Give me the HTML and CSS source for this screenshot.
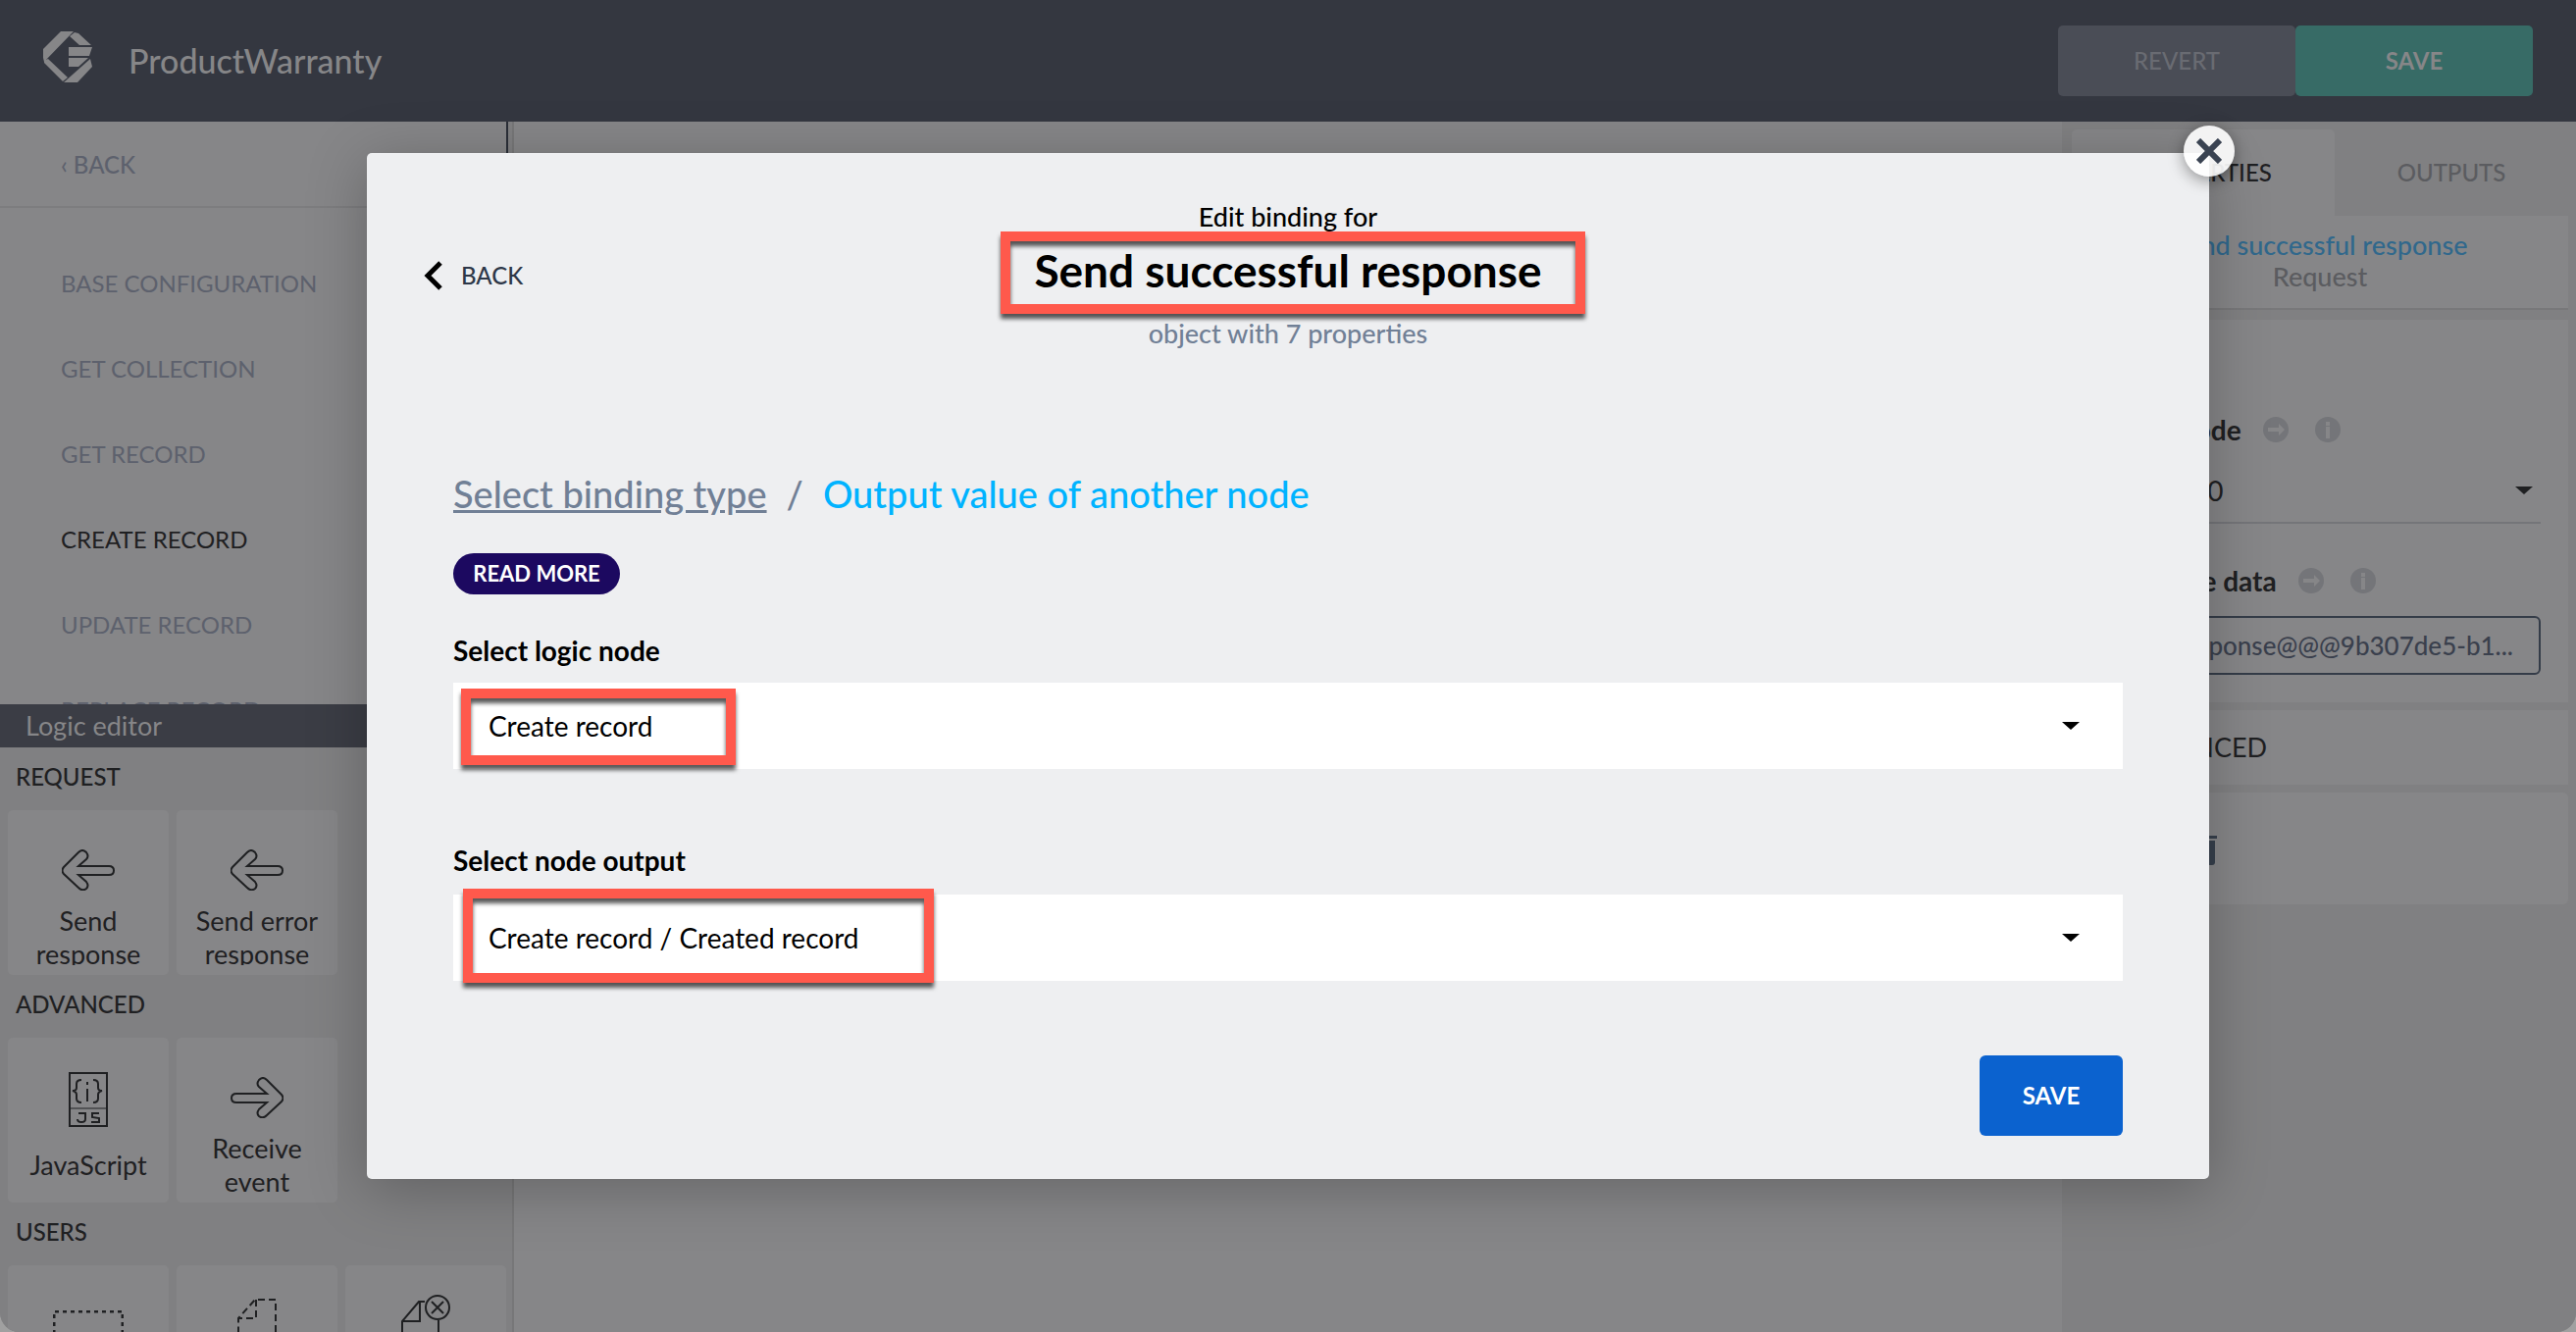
FILE: index.html
```html
<!DOCTYPE html>
<html lang="en">
<head>
<meta charset="utf-8">
<title>ProductWarranty</title>
<link rel="stylesheet" href="styles.css">
</head>
<body>
<svg class="sprite" aria-hidden="true">
  <symbol id="arrow" viewBox="0 0 54 42">
    <path d="M2 18 17 3Q21 -1 25 3Q28 7 25 10L17 17H48Q53 17 53 21.500Q53 26 48 26H17L25 33Q28 37 25 40Q21 43 17 39L2 25Q-1 21.500 2 18Z" fill="none" stroke="currentColor" stroke-width="2"/>
  </symbol>
  <symbol id="go" viewBox="0 0 26 26">
    <circle cx="13" cy="13" r="13" fill="#747579"/>
    <path d="M5 11h11V7l6 6-6 6v-4H5z" fill="#868688"/>
  </symbol>
  <symbol id="info" viewBox="0 0 26 26">
    <circle cx="13" cy="13" r="13" fill="#747579"/>
    <path d="M11 5h4v4h-4zM11 10h4v12h-4z" fill="#868688"/>
  </symbol>
</svg>
<div class="app">
  <header class="topbar">
    <svg class="logo" viewBox="0 0 50 52" aria-hidden="true">
      <path d="M18 0H31L1 31 0 27V18ZM32 1 36 2 49 14H37L27 5ZM26 16H50L47 25H26ZM26 27H46L36 36H26ZM5 28 25 47 20 51 1 32V30ZM48 28 50 36 35 52H21Z" fill="currentColor"/>
    </svg>
    <h1 class="product">ProductWarranty</h1>
    <button class="top-btn revert" type="button">REVERT</button>
    <button class="top-btn save" type="button">SAVE</button>
  </header>
  <div class="body">
    <aside class="left">
      <nav class="nav">
        <a class="nav-back" href="#">‹ BACK</a>
        <ul class="nav-list">
          <li><a href="#">BASE CONFIGURATION</a></li>
          <li><a href="#">GET COLLECTION</a></li>
          <li><a href="#">GET RECORD</a></li>
          <li><a class="current" href="#">CREATE RECORD</a></li>
          <li><a href="#">UPDATE RECORD</a></li>
          <li><a href="#">REPLACE RECORD</a></li>
        </ul>
      </nav>
      <section class="logic">
        <h2 class="logic-title">Logic editor</h2>
        <h3 class="group">REQUEST</h3>
        <div class="cards">
          <div class="card"><svg class="ic-arrow"><use href="#arrow"/></svg><span>Send response</span></div>
          <div class="card"><svg class="ic-arrow"><use href="#arrow"/></svg><span>Send error response</span></div>
        </div>
        <h3 class="group">ADVANCED</h3>
        <div class="cards">
          <div class="card">
            <svg class="ic-js" viewBox="0 0 40 56"><g fill="none" stroke="currentColor" stroke-width="2"><path d="M1 1H39V55H1Z"/><path d="M1 37H39" stroke-width="1"/><path d="M13 8Q8 8 8 12V16Q8 19 4 19Q8 20 8 23V27Q8 31 13 31M25 8Q30 8 30 12V16Q30 19 34 19Q30 20 30 23V27Q30 31 25 31M19 10V13M19 17V30"/><path d="M10 42H17V48Q17 51 13 51Q9 51 9 48M31 42H24V46L31 47V51H23"/></g></svg>
            <span>JavaScript</span>
          </div>
          <div class="card"><svg class="ic-arrow flip"><use href="#arrow"/></svg><span>Receive event</span></div>
        </div>
        <h3 class="group">USERS</h3>
        <div class="cards">
          <div class="card"><svg class="ic-user" viewBox="0 0 72 56"><path d="M1 56V1H71V56" fill="none" stroke="currentColor" stroke-width="3" stroke-dasharray="4 4"/></svg></div>
          <div class="card"><svg class="ic-doc" viewBox="0 0 40 56"><path d="M39 56V1H18L1 20V56M19 1V20H1" fill="none" stroke="currentColor" stroke-width="2" stroke-dasharray="7 4"/></svg></div>
          <div class="card"><svg class="ic-del" viewBox="0 0 50 56"><g fill="none" stroke="currentColor" stroke-width="2"><path d="M1 56V27L18 7H24M19 7V27H1M38 26V56"/><circle cx="37" cy="13" r="12"/><path d="M31 7 43 19M43 7 31 19"/></g></svg></div>
        </div>
      </section>
    </aside>
    <main class="canvas"></main>
    <aside class="right">
      <div class="tabs">
        <button class="tab active" type="button">PROPERTIES</button>
        <button class="tab" type="button">OUTPUTS</button>
      </div>
      <div class="node-head">
        <strong>Send successful response</strong>
        <span>Request</span>
      </div>
      <section class="props">
        <div class="prop-label"><label for="status">Status code</label><svg><use href="#go"/></svg><svg><use href="#info"/></svg></div>
        <div class="select-wrap small">
          <select id="status"><option>HTTP 200</option></select>
        </div>
        <div class="prop-label second"><label for="data">Response data</label><svg><use href="#go"/></svg><svg><use href="#info"/></svg></div>
        <input class="data" id="data" type="text" value="response@@@9b307de5-b1..." readonly>
      </section>
      <section class="accordion">ADVANCED</section>
      <section class="trash">
        <button type="button" aria-label="Delete node"><svg viewBox="0 0 28 32"><path d="M9 2 11 0H17L19 2H28V5H0V2ZM2 7H26V29Q26 32 23 32H5Q2 32 2 29Z" fill="currentColor"/></svg></button>
      </section>
    </aside>
  </div>

  <div class="overlay">
    <div class="modal" role="dialog" aria-labelledby="binding-title">
      <button class="close" type="button" aria-label="Close"><svg viewBox="0 0 26 26"><path d="M2 2 24 24M24 2 2 24" stroke="#3a4352" stroke-width="6"/></svg></button>
      <header class="modal-head">
        <button class="back" type="button"><svg viewBox="0 0 20 30"><path d="M17 2 4 15 17 28" fill="none" stroke="#000" stroke-width="5"/></svg>BACK</button>
        <div class="titles">
          <p class="kicker">Edit binding for</p>
          <h2 id="binding-title"><span>Send successful response</span><i class="mark mark-title"></i></h2>
          <p class="sub">object with 7 properties</p>
        </div>
      </header>
      <form class="form">
        <p class="crumbs"><a href="#">Select binding type</a><span>/</span><b>Output value of another node</b></p>
        <a class="more" href="#">READ MORE</a>
        <label class="field-label" for="node">Select logic node</label>
        <div class="select-wrap">
          <select id="node"><option>Create record</option></select>
          <i class="mark mark-node"></i>
        </div>
        <label class="field-label next" for="output">Select node output</label>
        <div class="select-wrap">
          <select id="output"><option>Create record / Created record</option></select>
          <i class="mark mark-output"></i>
        </div>
        <button class="submit" type="button">SAVE</button>
      </form>
    </div>
  </div>
</div>
</body>
</html>
```
FILE: styles.css
```css
* { box-sizing: border-box; }
body {
  margin: 0;
  background: #a0a0a0;
  color: #1f2022;
  font-family: Lato, "Liberation Sans", sans-serif;
  font-size: 28px;
  line-height: 34px;
}
h1, h2, h3, p, ul { margin: 0; padding: 0; font-weight: 400; }
ul { list-style: none; }
a { color: inherit; text-decoration: none; }
button, input, select { margin: 0; padding: 0; border: 0; background: none; color: inherit; font: inherit; }
.sprite { position: absolute; width: 0; height: 0; }

.app {
  position: relative;
  display: flex;
  flex-direction: column;
  height: 100vh;
  overflow: hidden;
  border-radius: 0 0 20px 20px;
  background: #868688;
}

.topbar {
  display: flex;
  align-items: center;
  flex: none;
  height: 124px;
  padding: 0 44px;
  background: #343740;
  color: #868688;
}
.logo { width: 50px; height: 52px; margin: 0 37px 8px 0; }
.product { flex: 1; font-size: 34px; font-weight: 500; }
.top-btn { width: 242px; height: 72px; border-radius: 5px; font-size: 24px; font-weight: 500; }
.revert { background: #4a4d56; color: #696b72; }
.save { background: #376b66; font-weight: 700; }

.body { display: flex; flex: 1; min-height: 0; }
.left {
  display: flex;
  flex-direction: column;
  flex: none;
  width: 524px;
  border-right: 2px solid #777778;
  background: #808082;
}
.nav {
  flex: none;
  height: 594px;
  width: 518px;
  overflow: hidden;
  border-right: 2px solid #2b2f38;
  background: #868688;
  color: #5d616d;
  font-size: 24px;
  font-weight: 500;
}
.nav-back { display: block; height: 88px; padding: 27px 62px; border-bottom: 2px solid #7d7d7f; }
.nav-list { padding: 33px 62px; }
.nav-list a { display: block; height: 87px; padding: 27px 0; }
.nav-list .current { color: #1f2022; }

.logic { flex: 1; min-height: 0; overflow: hidden; }
.logic-title { height: 44px; padding: 5px 26px; background: #3b3d45; color: #868688; font-size: 27px; }
.group { height: 64px; padding: 13px 16px; font-size: 24px; font-weight: 500; }
.cards { display: grid; grid-template-columns: repeat(3, 1fr); gap: 8px; padding: 0 6px 0 8px; }
.card {
  display: flex;
  flex-direction: column;
  align-items: center;
  height: 168px;
  padding: 40px 16px 10px;
  overflow: hidden;
  border-radius: 5px;
  background: #868688;
  font-size: 27px;
  text-align: center;
}
.card span { flex: 1; min-height: 0; overflow: hidden; }
.ic-arrow { flex: none; width: 54px; height: 42px; margin-bottom: 14px; }
.flip { transform: scaleX(-1); }
.ic-js { flex: none; width: 40px; height: 56px; margin: -5px 0 22px; }
.ic-user { flex: none; width: 72px; height: 56px; margin-top: 6px; }
.ic-doc { flex: none; width: 40px; height: 56px; margin-top: -6px; }
.ic-del { flex: none; width: 50px; height: 56px; margin-top: -10px; }

.canvas { flex: 1; }
.right { flex: none; width: 524px; padding: 8px 8px 0 10px; background: #808082; }
.tabs { display: flex; height: 88px; }
.tab { flex: 1; color: #5b5c60; font-size: 24px; font-weight: 500; }
.tab.active { flex: none; width: 268px; border-radius: 5px 5px 0 0; background: #868688; color: #1f2022; }
.node-head {
  height: 96px;
  margin-bottom: 10px;
  padding: 14px 0;
  border-bottom: 2px solid #78787a;
  background: #868688;
  color: #5b5c60;
  font-size: 27px;
  text-align: center;
  line-height: 32px;
}
.node-head strong, .node-head span { display: block; font-weight: 500; }
.node-head strong { color: #30688c; }
.props { height: 390px; margin-bottom: 8px; padding: 94px 28px 0; background: #868688; }
.prop-label { display: flex; align-items: center; height: 36px; }
.prop-label label { font-weight: 700; }
.prop-label svg { width: 26px; height: 26px; margin-left: 27px; }
.prop-label label + svg { margin-left: 22px; }
.prop-label.second { margin: 40px 0 18px; }
.data {
  display: block;
  width: 100%;
  height: 60px;
  padding: 0 26px;
  border: 2px solid #343c48;
  border-radius: 6px;
  color: #3a404d;
  font-size: 26px;
  font-weight: 500;
  text-align: right;
}
.accordion { height: 76px; margin-bottom: 8px; padding: 21px 51px; background: #868688; font-size: 27px; }
.trash { height: 114px; padding: 42px 120px; border-radius: 5px; background: #868688; color: #37404d; }
.trash button, .trash svg { display: block; width: 28px; height: 32px; }

.select-wrap { position: relative; }
.select-wrap select {
  display: block;
  width: 100%;
  height: 88px;
  padding: 0 36px;
  appearance: none;
  background: #fff;
  color: #000;
  line-height: 34px;
}
.select-wrap::after {
  content: "";
  position: absolute;
  top: 40px;
  right: 44px;
  border: solid transparent;
  border-width: 8px 9px 0;
  border-top-color: #000;
}
.small select { height: 78px; padding: 12px 0 0; border-bottom: 2px solid #747579; background: none; color: #1f2022; }
.small::after { top: 40px; right: 8px; border-top-color: #1f2022; }

.overlay { position: absolute; inset: 156px 374px auto; }
.modal {
  position: relative;
  padding: 46px 88px 44px;
  border-radius: 5px;
  background: #eeeff1;
  box-shadow: 0 10px 60px rgba(0, 0, 0, .25);
  color: #000;
}
.close {
  position: absolute;
  top: -28px;
  right: -26px;
  width: 52px;
  height: 52px;
  border-radius: 50%;
  background: rgba(255, 255, 255, .9);
  box-shadow: 0 4px 16px rgba(0, 0, 0, .4);
}
.close svg { display: block; width: 26px; height: 26px; margin: auto; }
.modal-head { position: relative; height: 276px; text-align: center; }
.back {
  position: absolute;
  top: 62px;
  left: -30px;
  display: flex;
  align-items: center;
  gap: 18px;
  color: #2d3748;
  font-size: 24px;
  font-weight: 500;
}
.back svg { width: 20px; height: 30px; }
.kicker { height: 36px; padding-top: 2px; font-size: 27px; font-weight: 500; }
.modal-head h2 { position: relative; height: 76px; font-size: 46px; font-weight: 700; line-height: 76px; }
.sub { padding-top: 9px; color: #718096; font-size: 27px; font-weight: 500; }
.form { display: flex; flex-direction: column; }
.crumbs { display: flex; gap: 20px; margin-bottom: 36px; color: #718096; font-size: 38px; font-weight: 500; line-height: 50px; }
.crumbs a { text-decoration: underline; }
.crumbs b { color: #00b3ff; font-weight: 500; }
.more {
  align-self: flex-start;
  width: 170px;
  height: 42px;
  border-radius: 21px;
  background: #1c0960;
  color: #fff;
  font-size: 22px;
  font-weight: 700;
  line-height: 42px;
  text-align: center;
}
.field-label { margin: 40px 0 16px; font-weight: 700; }
.next { margin: 76px 0 18px; }
.submit {
  align-self: flex-end;
  width: 146px;
  height: 82px;
  margin-top: 76px;
  border-radius: 6px;
  background: #0b62cf;
  color: #fff;
  font-size: 24px;
  font-weight: 700;
}

/* Callout frames laid over the highlighted values */
.mark {
  position: absolute;
  border: 10px solid #ff594c;
  filter: drop-shadow(0 5px 2px rgba(0, 0, 0, .65));
  pointer-events: none;
}
.mark-title { top: -2px; left: 50%; width: 596px; height: 84px; margin-left: -293px; }
.mark-node { top: 6px; left: 8px; width: 280px; height: 78px; }
.mark-output { top: -6px; left: 10px; width: 480px; height: 96px; }
```
